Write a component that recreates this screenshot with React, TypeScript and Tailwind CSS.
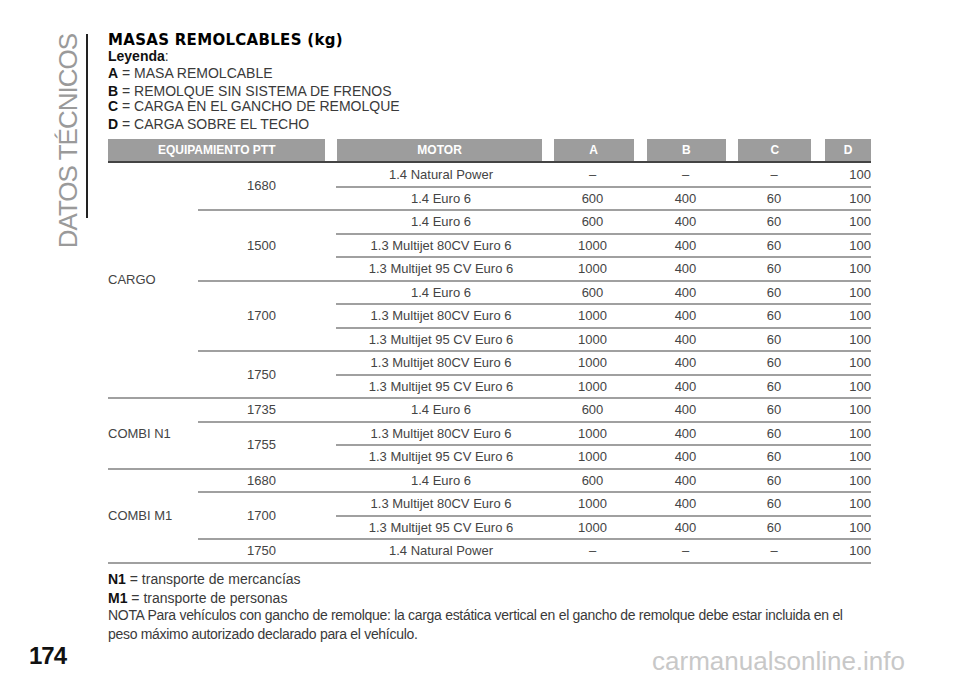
import React from "react";

type Row = { v?: [string, number]; p?: [string, number]; m: string; a: string; b: string; c: string; d: string };
const D = "–";
const rows: Row[] = [
  { v: ["CARGO", 10], p: ["1680", 2], m: "1.4 Natural Power", a: D, b: D, c: D, d: "100" },
  { m: "1.4 Euro 6", a: "600", b: "400", c: "60", d: "100" },
  { p: ["1500", 3], m: "1.4 Euro 6", a: "600", b: "400", c: "60", d: "100" },
  { m: "1.3 Multijet 80CV Euro 6", a: "1000", b: "400", c: "60", d: "100" },
  { m: "1.3 Multijet 95 CV Euro 6", a: "1000", b: "400", c: "60", d: "100" },
  { p: ["1700", 3], m: "1.4 Euro 6", a: "600", b: "400", c: "60", d: "100" },
  { m: "1.3 Multijet 80CV Euro 6", a: "1000", b: "400", c: "60", d: "100" },
  { m: "1.3 Multijet 95 CV Euro 6", a: "1000", b: "400", c: "60", d: "100" },
  { p: ["1750", 2], m: "1.3 Multijet 80CV Euro 6", a: "1000", b: "400", c: "60", d: "100" },
  { m: "1.3 Multijet 95 CV Euro 6", a: "1000", b: "400", c: "60", d: "100" },
  { v: ["COMBI N1", 3], p: ["1735", 1], m: "1.4 Euro 6", a: "600", b: "400", c: "60", d: "100" },
  { p: ["1755", 2], m: "1.3 Multijet 80CV Euro 6", a: "1000", b: "400", c: "60", d: "100" },
  { m: "1.3 Multijet 95 CV Euro 6", a: "1000", b: "400", c: "60", d: "100" },
  { v: ["COMBI M1", 4], p: ["1680", 1], m: "1.4 Euro 6", a: "600", b: "400", c: "60", d: "100" },
  { p: ["1700", 2], m: "1.3 Multijet 80CV Euro 6", a: "1000", b: "400", c: "60", d: "100" },
  { m: "1.3 Multijet 95 CV Euro 6", a: "1000", b: "400", c: "60", d: "100" },
  { p: ["1750", 1], m: "1.4 Natural Power", a: D, b: D, c: D, d: "100" },
];

const bd = "border-b-2 border-[#a0a0a0] p-0";

export default function App() {
  return (
    <div className="w-[960px] h-[678px] bg-white text-[#3a3a3a] flex flex-col overflow-hidden" style={{ fontFamily: "'Liberation Sans', Arial, sans-serif" }}>
      <div className="flex pt-[32px]">
        <div className="w-[108px] shrink-0 flex justify-end items-start">
          <div className="[writing-mode:vertical-rl] rotate-180 whitespace-nowrap text-[26px] leading-none text-[#9a9a9a] tracking-[-1px] mr-[5px] mt-[2px]">DATOS TÉCNICOS</div>
          <div className="w-[2px] h-[184px] bg-[#222] mr-[20px] mt-[2px]"></div>
        </div>
        <div className="w-[763px]">
          <div className="text-[15px] font-bold text-black leading-[16px] tracking-[0.3px]" style={{ fontFamily: "'DejaVu Sans', sans-serif" }}>MASAS REMOLCABLES (kg)</div>
          <div className="text-[14px] leading-[16px]"><b className="text-[#111]">Leyenda</b>:</div>
          <div className="text-[14px] leading-[17px] mt-[1px]"><b className="text-[#111]">A</b> = MASA REMOLCABLE</div>
          <div className="text-[14px] leading-[16px] mt-[1px]"><b className="text-[#111]">B</b> = REMOLQUE SIN SISTEMA DE FRENOS</div>
          <div className="text-[14px] leading-[15px]"><b className="text-[#111]">C</b> = CARGA EN EL GANCHO DE REMOLQUE</div>
          <div className="text-[14px] leading-[16px] mt-[2px]"><b className="text-[#111]">D</b> = CARGA SOBRE EL TECHO</div>
          <div className="flex mt-[7px] h-[24px] text-white font-bold text-[12px] border-b-2 border-[#444]">
            {[["EQUIPAMIENTO PTT", 218, 0], ["MOTOR", 205, 12], ["A", 80, 12], ["B", 80, 13], ["C", 73, 12], ["D", 46, 14]].map(([t, w, ml]) => (
              <div key={t as string} className="bg-[#9d9d9d] flex items-center justify-center" style={{ width: w as number, marginLeft: ml as number }}>{t}</div>
            ))}
          </div>
          <table className="border-collapse text-[13px] text-[#444]" style={{ width: 763 }}>
            <colgroup>
              <col style={{ width: 90 }} /><col style={{ width: 138 }} /><col style={{ width: 210 }} />
              <col style={{ width: 93 }} /><col style={{ width: 93 }} /><col style={{ width: 84 }} /><col style={{ width: 55 }} />
            </colgroup>
            <tbody>
              {rows.map((r, i) => (
                <tr key={i} className="h-[23.5px]">
                  {r.v && <td rowSpan={r.v[1]} className={`${bd} text-left`}>{r.v[0]}</td>}
                  {r.p && <td rowSpan={r.p[1]} className={`${bd} text-center pr-[11px]`}>{r.p[0]}</td>}
                  <td className={`${bd} text-center`}>{r.m}</td>
                  <td className={`${bd} text-center`}>{r.a}</td>
                  <td className={`${bd} text-center`}>{r.b}</td>
                  <td className={`${bd} text-center`}>{r.c}</td>
                  <td className={`${bd} text-right`}>{r.d}</td>
                </tr>
              ))}
            </tbody>
          </table>
          <div className="text-[14px] leading-[18px] mt-[6px]"><b className="text-[#111]">N1</b> = transporte de mercancías</div>
          <div className="text-[14px] leading-[16px] mt-[2px]"><b className="text-[#111]">M1</b> = transporte de personas</div>
          <div className="text-[14px] leading-[19px] tracking-[-0.3px]">NOTA Para vehículos con gancho de remolque: la carga estática vertical en el gancho de remolque debe estar incluida en el peso máximo autorizado declarado para el vehículo.</div>
        </div>
      </div>
      <div className="flex items-end justify-between mt-auto pb-[4px]">
        <div className="ml-[29px] text-[24px] font-bold text-[#111] leading-none mb-[6px] tracking-[-1px]">174</div>
        <div className="mr-[55px] text-[26px] text-[#c8c8c8] leading-none">carmanualsonline.info</div>
      </div>
    </div>
  );
}
